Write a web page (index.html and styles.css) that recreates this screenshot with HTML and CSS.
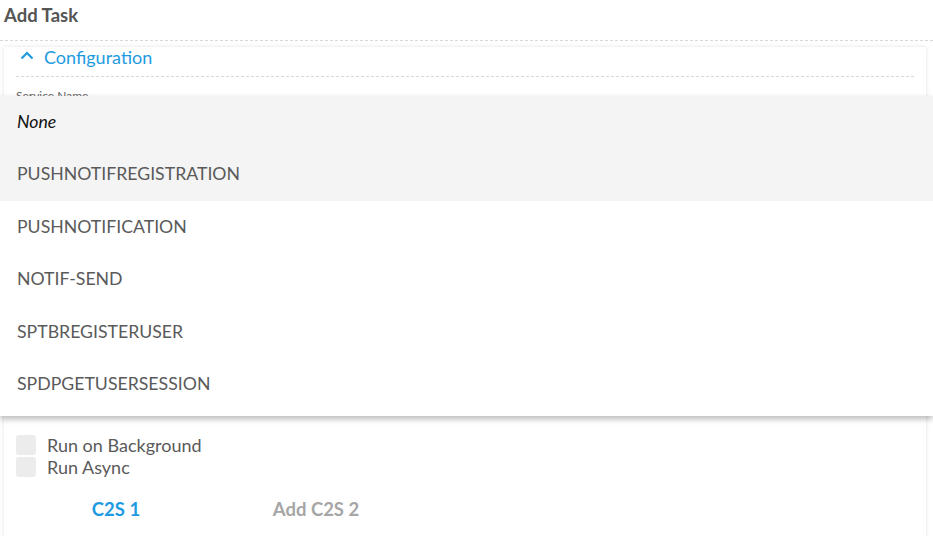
FILE: index.html
```html
<!DOCTYPE html>
<html>
<head>
<meta charset="utf-8">
<link rel="stylesheet" href="styles.css">
</head>
<body>
<div class="page">
  <div class="title">Add Task</div>
  <div class="card">
    <div class="section-head">
      <svg class="chev" width="14" height="10" viewBox="0 0 14 10"><path d="M1.5 8.5 L7 3 L12.5 8.5" fill="none" stroke="#1e9be0" stroke-width="2.2"/></svg>
      <span>Configuration</span>
    </div>
    <div class="field">
      <div class="label">Service Name</div>
      <div class="field-body"></div>
    </div>
    <label class="check"><span class="box"></span><span>Run on Background</span></label>
    <label class="check"><span class="box"></span><span>Run Async</span></label>
    <div class="tabs">
      <div class="tab active">C2S 1</div>
      <div class="tab">Add C2S 2</div>
    </div>
  </div>
  <ul class="menu">
    <li class="item hl none">None</li>
    <li class="item hl">PUSHNOTIFREGISTRATION</li>
    <li class="item">PUSHNOTIFICATION</li>
    <li class="item">NOTIF-SEND</li>
    <li class="item">SPTBREGISTERUSER</li>
    <li class="item">SPDPGETUSERSESSION</li>
  </ul>
</div>
</body>
</html>
```
FILE: styles.css
```css
html, body {
  margin: 0;
  padding: 0;
  background: #fff;
  font-family: Lato, "Open Sans", sans-serif;
  overflow: hidden;
}
.page {
  position: relative;
  width: 933px;
  height: 536px;
  overflow: hidden;
}
.title {
  height: 41px;
  box-sizing: border-box;
  padding: 4px 4px 0;
  font-size: 18.5px;
  font-weight: 700;
  color: #555;
  line-height: 22px;
  border-bottom: 1px dashed #d8d8d8;
}
.card {
  margin: 6px 7px 0 4px;
  padding: 0 12px;
  background: #fff;
  box-shadow: 0 0 4px rgba(0,0,0,0.12);
  height: 600px;
}
.section-head {
  display: flex;
  align-items: flex-start;
  height: 30px;
  border-bottom: 1px dashed #d8d8d8;
  color: #1e9be0;
  font-size: 18px;
  line-height: 20px;
  padding-left: 4px;
  box-sizing: border-box;
}
.chev { margin-right: 10px; margin-top: 3px; }
.label {
  font-size: 12px;
  color: #666;
  padding-top: 12px;
  line-height: 14px;
}
.field-body { height: 331px; }
.check {
  display: flex;
  align-items: center;
  height: 22px;
  font-size: 18px;
  color: #5a5a5a;
}
.box {
  width: 20px;
  height: 20px;
  background: #ececec;
  border-radius: 3px;
  margin-right: 11px;
}
.tabs {
  display: flex;
  margin-top: 20px;
}
.tab {
  width: 200px;
  text-align: center;
  font-size: 18.5px;
  font-weight: 700;
  color: #a6a6a6;
  line-height: 22px;
}
.tab.active { color: #1e9be0; }
.menu {
  position: absolute;
  top: 96px;
  left: 0;
  width: 933px;
  margin: 0;
  padding: 0 0 6px;
  list-style: none;
  background: #fff;
  box-shadow: 0 3px 6px rgba(0,0,0,0.28);
}
.item {
  height: 52.4px;
  line-height: 52.4px;
  padding-left: 17px;
  font-size: 17.7px;
  color: #5a5a5a;
}
.item.hl { background: #f4f4f4; }
.item.none { font-style: italic; color: #111; }
```
